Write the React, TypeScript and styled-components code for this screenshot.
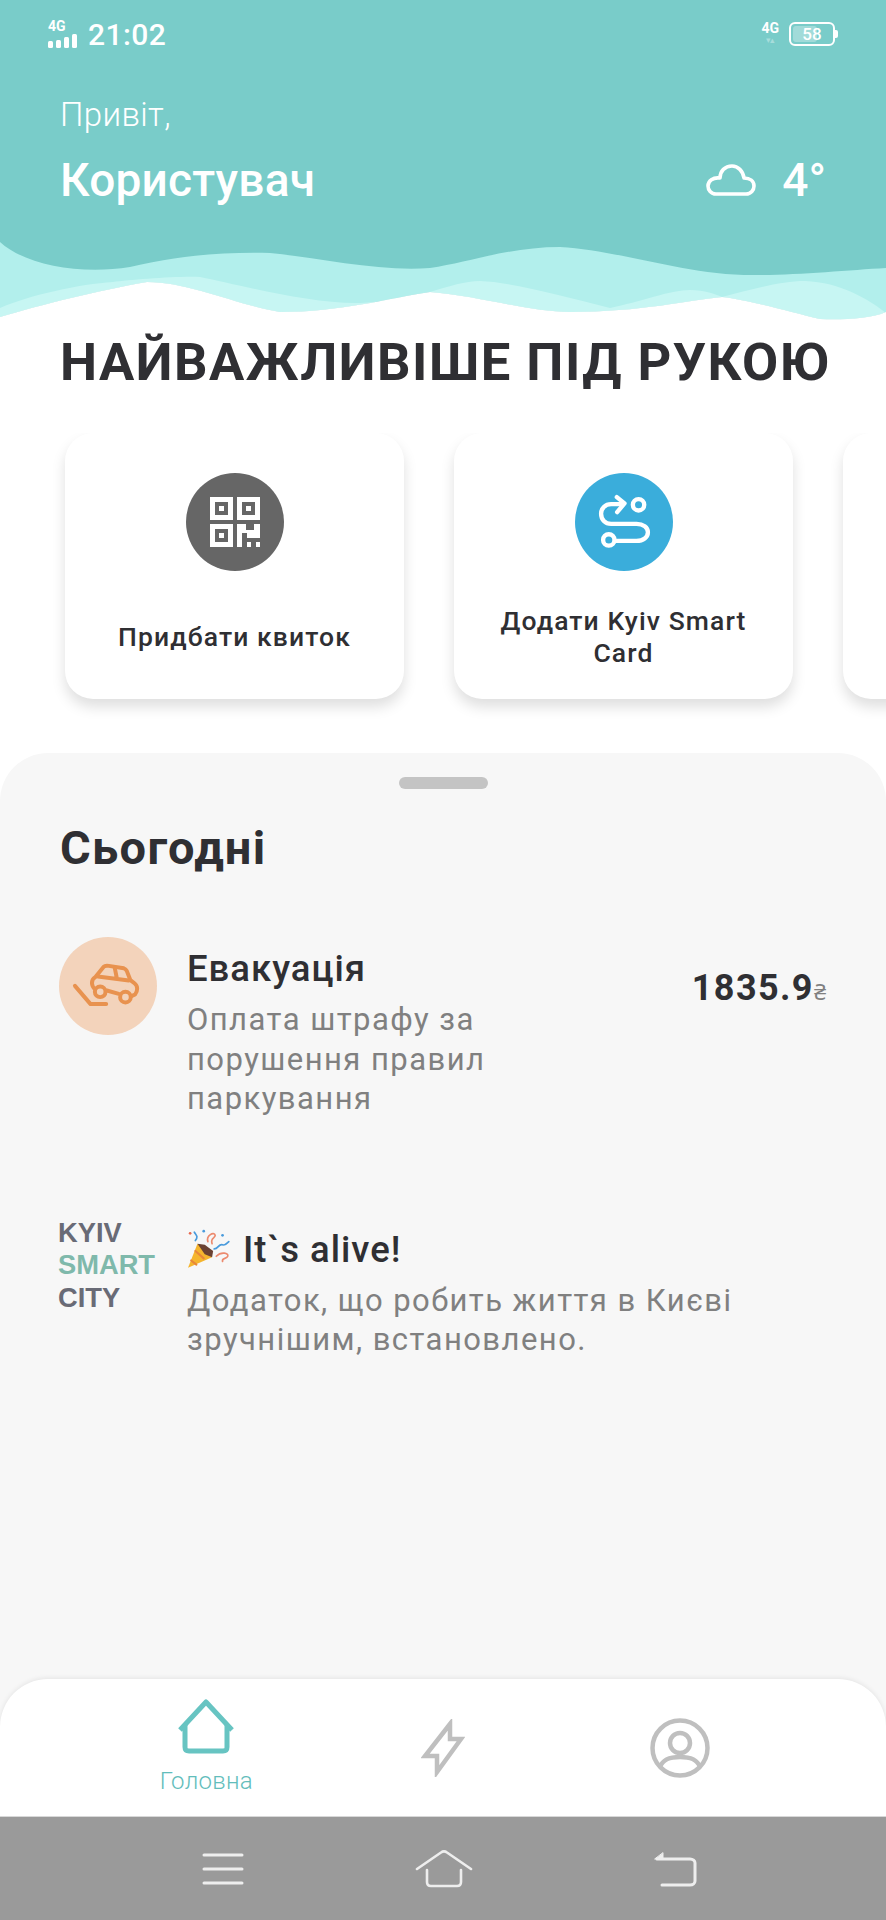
import * as React from 'react'
import styled, { createGlobalStyle } from 'styled-components'

const GlobalStyle = createGlobalStyle`
  html, body {
    margin: 0;
    padding: 0;
    background: #fff;
    font-family: Roboto, "Noto Sans", sans-serif;
  }
  * { box-sizing: border-box; }
`

const Page = styled.div`
  width: 886px;
  height: 1920px;
  display: flex;
  flex-direction: column;
  overflow: hidden;
  background: #fff;
`

const Header = styled.header`
  height: 240px;
  flex: none;
  background: #79ccc9;
  color: #fff;
`

const StatusBar = styled.div`
  height: 68px;
  padding: 0 48px;
  display: flex;
  align-items: center;
  justify-content: space-between;
`

const StatusGroup = styled.div`
  display: flex;
  align-items: center;
  gap: 10px;
`

const Signal = styled.div`
  width: 30px;
  display: flex;
  flex-direction: column;
  gap: 1px;
`

const TinyLabel = styled.span`
  font-size: 14px;
  line-height: 13px;
  font-weight: 700;
  color: #fff;
`

const Bars = styled.div`
  display: flex;
  align-items: flex-end;
  gap: 3px;
  height: 14px;
`

const Bar = styled.i<{ $h: number }>`
  width: 5px;
  height: ${p => p.$h}px;
  background: #fff;
  border-radius: 1.5px;
`

const Time = styled.span`
  font-size: 30px;
  font-weight: 500;
  letter-spacing: 0.4px;
`

const NetworkInfo = styled.div`
  display: flex;
  flex-direction: column;
  align-items: center;
  margin-top: -2px;
`

const Arrows = styled.span`
  font-size: 9px;
  line-height: 10px;
  letter-spacing: -1px;
  color: rgba(255, 255, 255, 0.35);
`

const Battery = styled.div`
  position: relative;
  width: 46px;
  height: 24px;
  border: 2px solid #fff;
  border-radius: 6px;
  display: flex;
  align-items: center;
  justify-content: center;
  font-size: 17px;
  font-weight: 500;
  margin-right: 3px;

  &::before {
    content: '';
    position: absolute;
    left: 2px;
    top: 2px;
    bottom: 2px;
    width: 58%;
    border-radius: 3px;
    background: rgba(255, 255, 255, 0.3);
  }

  &::after {
    content: '';
    position: absolute;
    right: -5px;
    top: 6px;
    width: 3px;
    height: 8px;
    border-radius: 0 2px 2px 0;
    background: #fff;
  }
`

const BatteryValue = styled.span`
  position: relative;
`

const Greeting = styled.div`
  padding: 27px 60px 0;
  font-size: 33px;
  line-height: 40px;
  font-weight: 300;
  letter-spacing: 0.4px;
`

const NameRow = styled.div`
  padding: 19px 60px 0;
  display: flex;
  align-items: center;
  justify-content: space-between;
`

const UserName = styled.div`
  font-size: 46px;
  line-height: 52px;
  font-weight: 500;
  letter-spacing: 0.2px;
`

const Weather = styled.div`
  display: flex;
  align-items: center;
  gap: 26px;
  font-size: 46px;
  line-height: 52px;
  font-weight: 500;
`

const Wave = styled.svg`
  display: block;
  flex: none;
  width: 886px;
  height: 80px;
`

const Title = styled.h1`
  margin: 12px 0 0 60px;
  font-size: 52.5px;
  line-height: 60px;
  font-weight: 700;
  letter-spacing: 1.5px;
  color: #2f2f33;
  white-space: nowrap;
`

const Cards = styled.div`
  flex: none;
  margin-top: 41px;
  padding-left: 65px;
  display: flex;
  gap: 50px;
  overflow: hidden;
  height: 320px;
`

const Card = styled.div`
  flex: none;
  width: 339px;
  height: 266px;
  border-radius: 28px;
  background: #fff;
  box-shadow: 0 8px 14px rgba(0, 0, 0, 0.13);
  padding: 40px 30px 0;
  display: flex;
  flex-direction: column;
  align-items: center;
`

const IconCircle = styled.div<{ $color: string }>`
  flex: none;
  width: 98px;
  height: 98px;
  border-radius: 50%;
  background: ${p => p.$color};
  display: flex;
  align-items: center;
  justify-content: center;
`

const CardLabel = styled.div`
  flex: none;
  display: flex;
  align-items: center;
  justify-content: center;
  text-align: center;
  margin-top: 28px;
  height: 76px;
  font-size: 26.5px;
  line-height: 32px;
  font-weight: 500;
  letter-spacing: 1.1px;
  color: #2f2f33;
`

const Sheet = styled.section`
  flex: 1;
  background: #f7f7f7;
  border-radius: 48px 48px 0 0;
  display: flex;
  flex-direction: column;
`

const Handle = styled.div`
  width: 89px;
  height: 12px;
  margin: 24px auto 0;
  border-radius: 6px;
  background: #c4c4c4;
`

const SheetTitle = styled.h2`
  margin: 33px 0 0 60px;
  font-size: 47px;
  line-height: 52px;
  font-weight: 700;
  letter-spacing: 1.3px;
  color: #2f2f33;
`

const Feed = styled.div<{ $top: number }>`
  display: grid;
  grid-template-columns: 98px 1fr auto;
  column-gap: 30px;
  padding: 0 60px 0 59px;
  margin-top: ${p => p.$top}px;
`

const TextColumn = styled.div<{ $pad?: number }>`
  padding-top: ${p => p.$pad ?? 0}px;
`

const ItemTitle = styled.div`
  display: flex;
  align-items: center;
  gap: 10px;
  font-size: 36.5px;
  line-height: 46px;
  font-weight: 500;
  letter-spacing: 1px;
  color: #2f2f33;
`

const ItemText = styled.div<{ $width: number }>`
  margin-top: 8px;
  max-width: ${p => p.$width}px;
  font-size: 31px;
  line-height: 39.5px;
  letter-spacing: 1.45px;
  color: #808080;
`

const Amount = styled.div`
  padding-top: 28px;
  font-size: 36px;
  line-height: 46px;
  font-weight: 700;
  letter-spacing: 1.4px;
  color: #2f2f33;
  white-space: nowrap;
`

const Currency = styled.span`
  font-size: 22px;
  font-weight: 400;
  letter-spacing: 0;
  color: #808080;
`

const Logo = styled.div`
  margin: -10px 0 0 -1px;
  font-family: "Liberation Sans", Arial, sans-serif;
  font-size: 27.3px;
  line-height: 32.5px;
  font-weight: 700;
  color: #696b76;
`

const LogoAccent = styled.div`
  color: #7fb9ab;
`

const BottomNav = styled.nav`
  margin-top: auto;
  height: 137px;
  padding: 0 88px;
  display: grid;
  grid-template-columns: repeat(3, 1fr);
  background: #fff;
  border-radius: 48px 48px 0 0;
  box-shadow: 0 -1px 5px rgba(0, 0, 0, 0.08);
`

const NavItem = styled.div`
  display: flex;
  flex-direction: column;
  align-items: center;
  justify-content: center;
`

const NavLabel = styled.div`
  margin-top: 12px;
  font-size: 24px;
  line-height: 30px;
  font-weight: 300;
  letter-spacing: 0.3px;
  color: #62bdbb;
`

const SystemBar = styled.div`
  flex: none;
  height: 104px;
  padding: 0 189px 0 202px;
  border-top: 1px solid #d8d8d8;
  background: #9a9a9a;
  display: flex;
  align-items: center;
  justify-content: space-between;
`

const HomeKeySvg = styled.svg`
  margin-right: 9px;
`

const WHITE_EDGE =
  'C870 319 840 320 820 319 C790 312 750 300 722 297 C690 300 640 312 570 312 C530 312 480 296 430 292 C390 298 340 312 280 312 C240 306 190 282 147 282 C100 290 40 305 0 317'

const WavePaths = () => (
  <Wave viewBox="0 240 886 80" preserveAspectRatio="none">
    <rect x="0" y="240" width="886" height="80" fill="#79ccc9" />
    <path
      d={`M0 242 C25 265 80 275 130 267 C180 255 225 252 270 253 C320 258 380 272 430 268 C470 262 510 247 560 247 C620 250 690 277 760 275 C800 275 850 270 886 268 V312 ${WHITE_EDGE} Z`}
      fill="#b2efec"
    />
    <path
      d={`M0 308 C30 295 80 284 113 282 C130 280 175 276 200 277 C240 285 310 304 360 303 C390 302 410 294 430 292 C450 286 465 281 480 281 C510 282 560 295 610 308 C640 302 670 290 690 290 C705 290 715 294 722 297 C750 290 780 281 805 281 C840 282 870 300 886 313 V312 ${WHITE_EDGE} Z`}
      fill="#c7f6f3"
    />
    <path d={`M886 320 V312 ${WHITE_EDGE} V320 Z`} fill="#fff" />
  </Wave>
)

const QrIcon = () => (
  <svg width="50" height="50" viewBox="0 0 50 50" fill="none" stroke="#fff">
    <rect x="2.5" y="2.5" width="18" height="18" strokeWidth="5" />
    <rect x="29.5" y="2.5" width="18" height="18" strokeWidth="5" />
    <rect x="2.5" y="29.5" width="18" height="18" strokeWidth="5" />
    <rect x="9" y="9" width="5" height="5" fill="#fff" stroke="none" />
    <rect x="36" y="9" width="5" height="5" fill="#fff" stroke="none" />
    <rect x="9" y="36" width="5" height="5" fill="#fff" stroke="none" />
    <path d="M27 27H36V33H44V27H50V41H37V36H32V50H27Z" fill="#fff" stroke="none" />
    <rect x="37" y="45" width="4" height="5" fill="#fff" stroke="none" />
    <rect x="46" y="45" width="4" height="5" fill="#fff" stroke="none" />
  </svg>
)

const RouteIcon = () => (
  <svg width="98" height="98" viewBox="42 38 293 293" fill="none" stroke="#fff" strokeWidth="13" strokeLinecap="round" strokeLinejoin="round">
    <path d="M182 131H150C132 131 120 144 120 160C120 177 132 190 150 190H226C246 190 260 200 260 215C260 230 246 241 226 241H162" />
    <path d="M167 110L190 129L168 155" />
    <circle cx="143" cy="238" r="17" />
    <circle cx="232" cy="133" r="17" />
  </svg>
)

const TowIcon = () => (
  <svg width="98" height="98" viewBox="88 110 295 295" fill="none" stroke="#e8924f" strokeWidth="12" strokeLinecap="round" strokeLinejoin="round">
    <path d="M136 257L183 312H230" />
    <path d="M197 268C185 258 183 240 197 231L222 200C226 196 232 196 238 197L283 204C288 206 290 208 292 212L303 240L316 250C326 258 325 274 317 283L306 288" />
    <path d="M232 271L268 281" />
    <path d="M205 229L298 241M256 204L262 234" />
    <circle cx="212" cy="275" r="16" />
    <circle cx="288" cy="291" r="16" />
  </svg>
)

const PartyIcon = () => (
  <svg width="46" height="42" viewBox="0 0 44 40" fill="none" strokeLinecap="round">
    <path d="M1 37L10 14L24 27Z" fill="#f5b52e" />
    <path d="M10 14L17 15L25 21L24 27L17 24Z" fill="#6b4233" />
    <path d="M8 21L16 28M4 30L9 34" stroke="#e8873a" strokeWidth="2" />
    <path d="M7 3C9 6 11 7 8 11" stroke="#4a9bdc" strokeWidth="1.6" />
    <path d="M20 12C18 6 26 2 27 6C27 9 22 8 24 14" stroke="#ec8a6e" strokeWidth="1.6" />
    <path d="M26 19C30 19 30 14 34 15C36 16 38 14 40 12" stroke="#4a9bdc" strokeWidth="1.6" />
    <path d="M28 26C33 21 40 23 39 26C38 29 33 27 34 31" stroke="#ec8a6e" strokeWidth="1.6" />
    <circle cx="16" cy="2" r="1.3" fill="#4a9bdc" />
    <circle cx="3" cy="4" r="1.3" fill="#e8694e" />
    <circle cx="34" cy="6" r="1.3" fill="#4a9bdc" />
  </svg>
)

const CloudIcon = () => (
  <svg width="50" height="32" viewBox="0 0 50 32" fill="none" stroke="#fff" strokeWidth="3.6" strokeLinejoin="round">
    <path d="M10 30H40C45 30 48 26 48 22C48 17 44 14 38 14C37 7 32 2 26 2C19 2 14 7 14 14C7 13 2 17 2 22C2 26 5 30 10 30Z" />
  </svg>
)

const HomeIcon = () => (
  <svg width="58" height="55" viewBox="0 0 58 55" fill="none" stroke="#67c4c2" strokeWidth="5" strokeLinejoin="round">
    <path d="M3 31L29 3L55 31" />
    <path d="M8 25V48C8 51 9 52 12 52H46C49 52 50 51 50 48V25" />
  </svg>
)

const BoltIcon = () => (
  <svg width="44" height="58" viewBox="0 0 44 58" fill="none" stroke="#bfbfbf" strokeWidth="4.5" strokeLinejoin="miter">
    <path d="M29 5L4 37H16V53L40 20H29Z" />
  </svg>
)

const ProfileIcon = () => (
  <svg width="60" height="60" viewBox="0 0 60 60" fill="none" stroke="#bfbfbf" strokeWidth="4.5">
    <circle cx="30" cy="30" r="27.5" />
    <circle cx="30" cy="25" r="10" />
    <path d="M10 49C13 41 20 39 30 39C40 39 47 41 50 49" />
  </svg>
)

const MenuKey = () => (
  <svg width="42" height="32" viewBox="0 0 42 32" stroke="#eee" strokeWidth="3" strokeLinecap="round">
    <path d="M2 2H40M2 16H40M2 30H40" />
  </svg>
)

const HomeKey = () => (
  <HomeKeySvg width="58" height="38" viewBox="0 0 58 38" fill="none" stroke="#eee" strokeWidth="2.6" strokeLinecap="round" strokeLinejoin="round">
    <path d="M2 19L26 2.5C28 1 30 1 32 2.5L56 19" />
    <path d="M12 20V32C12 35 14 36 16 36H42C44 36 46 35 46 32V20" />
  </HomeKeySvg>
)

const BackKey = () => (
  <svg width="44" height="36" viewBox="0 0 44 36" fill="none" stroke="#eee" strokeWidth="3" strokeLinecap="round" strokeLinejoin="round">
    <path d="M4 8H37C40 8 42 10 42 12V30C42 32 40 34 37 34H9" />
    <path d="M10 2V8H2Z" fill="#eee" strokeWidth="1" />
  </svg>
)

export default function App() {
  return (
    <Page>
      <GlobalStyle />
      <Header>
        <StatusBar>
          <StatusGroup>
            <Signal>
              <TinyLabel>4G</TinyLabel>
              <Bars>
                <Bar $h={7} />
                <Bar $h={8} />
                <Bar $h={11} />
                <Bar $h={14} />
              </Bars>
            </Signal>
            <Time>21:02</Time>
          </StatusGroup>
          <StatusGroup>
            <NetworkInfo>
              <TinyLabel>4G</TinyLabel>
              <Arrows>▾▴</Arrows>
            </NetworkInfo>
            <Battery>
              <BatteryValue>58</BatteryValue>
            </Battery>
          </StatusGroup>
        </StatusBar>
        <Greeting>Привіт,</Greeting>
        <NameRow>
          <UserName>Користувач</UserName>
          <Weather>
            <CloudIcon />
            4°
          </Weather>
        </NameRow>
      </Header>
      <WavePaths />

      <Title>НАЙВАЖЛИВІШЕ ПІД РУКОЮ</Title>

      <Cards>
        <Card>
          <IconCircle $color="#666666">
            <QrIcon />
          </IconCircle>
          <CardLabel>Придбати квиток</CardLabel>
        </Card>
        <Card>
          <IconCircle $color="#3aaddb">
            <RouteIcon />
          </IconCircle>
          <CardLabel>Додати Kyiv Smart Card</CardLabel>
        </Card>
        <Card />
      </Cards>

      <Sheet>
        <Handle />
        <SheetTitle>Сьогодні</SheetTitle>

        <Feed $top={63}>
          <IconCircle $color="#f3d3bb">
            <TowIcon />
          </IconCircle>
          <TextColumn $pad={9}>
            <ItemTitle>Евакуація</ItemTitle>
            <ItemText $width={340}>Оплата штрафу за порушення правил паркування</ItemText>
          </TextColumn>
          <Amount>
            1835.9<Currency>₴</Currency>
          </Amount>
        </Feed>

        <Feed $top={108}>
          <Logo>
            KYIV
            <LogoAccent>SMART</LogoAccent>
            CITY
          </Logo>
          <TextColumn>
            <ItemTitle>
              <PartyIcon />
              It`s alive!
            </ItemTitle>
            <ItemText $width={600}>Додаток, що робить життя в Києві зручнішим, встановлено.</ItemText>
          </TextColumn>
        </Feed>

        <BottomNav>
          <NavItem>
            <HomeIcon />
            <NavLabel>Головна</NavLabel>
          </NavItem>
          <NavItem>
            <BoltIcon />
          </NavItem>
          <NavItem>
            <ProfileIcon />
          </NavItem>
        </BottomNav>
      </Sheet>

      <SystemBar>
        <MenuKey />
        <HomeKey />
        <BackKey />
      </SystemBar>
    </Page>
  )
}
